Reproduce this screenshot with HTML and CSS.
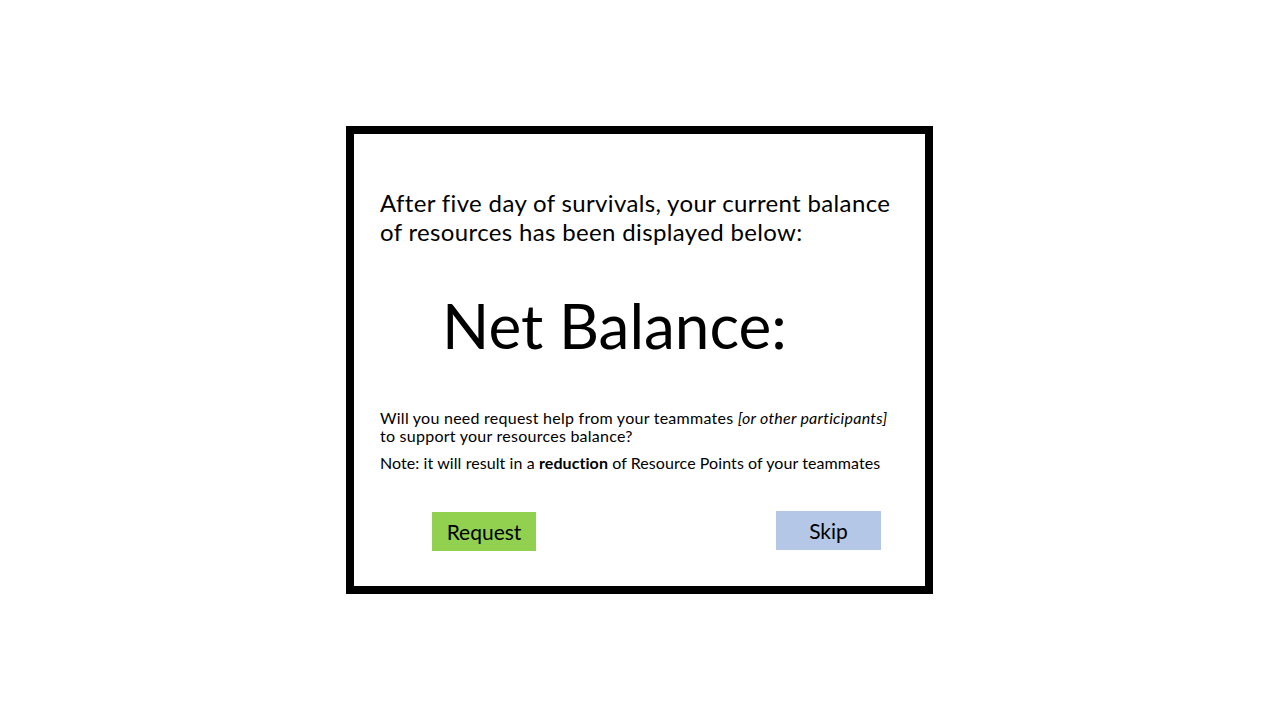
FILE: index.html
```html
<!DOCTYPE html>
<html lang="en">
<head>
<meta charset="utf-8">
<title>Net Balance</title>
<link rel="stylesheet" href="styles.css">
</head>
<body>
<main class="stage">
  <section class="dialog">
    <p class="intro">After five day of survivals, your current balance<br>of resources has been displayed below:</p>
    <h1 class="balance">Net Balance:</h1>
    <p class="question">Will you need request help from your teammates <em>[or other participants]</em><br>to support your resources balance?</p>
    <p class="note">Note: it will result in a <strong>reduction</strong> of Resource Points of your teammates</p>
    <div class="actions">
      <button class="btn btn-request" type="button">Request</button>
      <button class="btn btn-skip" type="button">Skip</button>
    </div>
  </section>
</main>
</body>
</html>
```
FILE: styles.css
```css
html, body {
  margin: 0;
  padding: 0;
  background: #ffffff;
}
body {
  font-family: "Lato", "Open Sans", "Liberation Sans", sans-serif;
  color: #000;
}
.stage {
  width: 1280px;
  height: 720px;
  box-sizing: border-box;
  padding: 126px 0 0 346px;
  display: flex;
  align-items: flex-start;
}
.dialog {
  box-sizing: border-box;
  width: 587px;
  height: 468px;
  border: 8px solid #000;
  padding: 54px 26px 0 26px;
  display: flex;
  flex-direction: column;
}
.intro {
  margin: 0;
  font-size: 24px;
  line-height: 29px;
  letter-spacing: 0.35px;
  white-space: nowrap;
}
.balance {
  margin: 48px 0 0 62px;
  font-size: 62px;
  line-height: 62px;
  font-weight: 400;
}
.question {
  margin: 53px 0 0 0;
  font-size: 16px;
  line-height: 18px;
  letter-spacing: 0.25px;
  white-space: nowrap;
}
.note {
  margin: 9px 0 0 0;
  font-size: 16px;
  line-height: 18px;
  letter-spacing: 0.08px;
  white-space: nowrap;
}
.actions {
  margin-top: 39px;
  display: flex;
  justify-content: space-between;
  align-items: flex-start;
  padding: 0 18px 0 52px;
}
.btn {
  border: 0;
  padding: 0;
  font-family: inherit;
  font-size: 21px;
  color: #000;
  height: 39px;
  width: 104px;
  cursor: pointer;
}
.btn-request {
  background: #92d050;
  margin-top: 1px;
}
.btn-skip {
  background: #b4c7e7;
  width: 105px;
}
```
